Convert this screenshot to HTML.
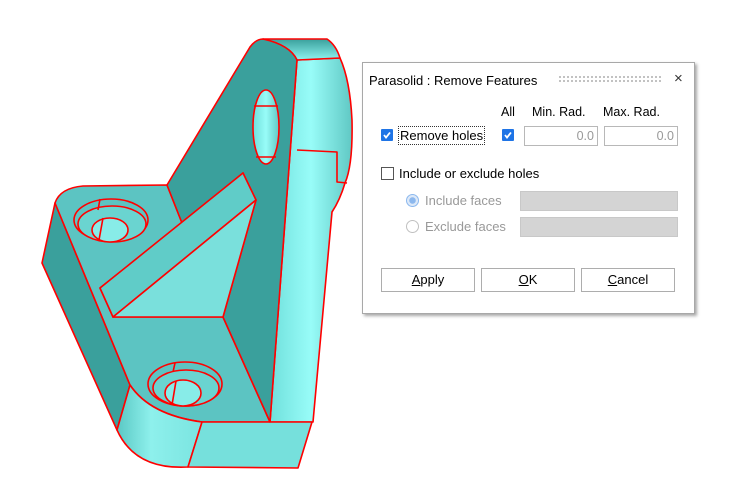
<!DOCTYPE html>
<html><head><meta charset="utf-8"><style>
body{margin:0;width:733px;height:486px;background:#fff;position:relative;overflow:hidden;font-family:"Liberation Sans",Arial,sans-serif;font-size:12.5px;color:#000}
.dlg{position:absolute;left:362px;top:62px;width:331px;height:250px;border:1px solid #a8a8a8;background:#fff;box-shadow:2px 2px 3px rgba(0,0,0,.35)}
.a{position:absolute;white-space:nowrap}
.cb{position:absolute;width:12px;height:12px;background:#1e74e6;border-radius:1px}
.cb svg{position:absolute;left:1px;top:1px}
.cbe{position:absolute;width:11px;height:11px;border:1px solid #555;background:#fff}
.in{position:absolute;height:20px;border:1px solid #b8b8b8;background:#fff;color:#999;text-align:right;box-sizing:border-box;padding:2px 3px 0 0}
.gr{position:absolute;height:20px;background:#d4d4d4;border:1px solid #c8c8c8;box-sizing:border-box}
.btn{position:absolute;top:205px;width:94px;height:24px;border:1px solid #adadad;box-sizing:border-box;background:#fff;text-align:center;line-height:22px;font-size:13px}
.rad{position:absolute;width:11px;height:11px;border:1px solid #c0c0c0;border-radius:50%;background:#fff}
</style></head><body>
<svg width="733" height="486" style="position:absolute;left:0;top:0" stroke="#f00" stroke-width="1.6" stroke-linejoin="round">
<defs>
<linearGradient id="cyl" x1="0" x2="1"><stop offset="0" stop-color="#5ac8c4"/><stop offset=".4" stop-color="#8ef0ec"/><stop offset="1" stop-color="#7ae4e0"/></linearGradient>
<linearGradient id="side" x1="0" x2="1"><stop offset="0" stop-color="#70e0dc"/><stop offset=".5" stop-color="#98fcf8"/><stop offset="1" stop-color="#60c8c4"/></linearGradient>
<linearGradient id="topg" x1="0" y1="0" x2="0" y2="1"><stop offset="0" stop-color="#3aa09c"/><stop offset="1" stop-color="#8ef4f0"/></linearGradient>
</defs>
<!-- right side of upright -->
<path d="M297,60 L340,58 Q350,80 352,120 Q353,165 345,183 Q340,200 332,212 L313,422 L270,422 Z" fill="url(#side)"/>
<path d="M263,39 L327,39 Q336,45 340,58 L297,60 Q290,45 263,39 Z" fill="url(#topg)"/>
<path d="M297,150 L337,152 L337,182 L347,183" fill="none"/>
<!-- left side dark -->
<path d="M55,203 L42,263 L117,430 L130,385 Z" fill="#3aa09c"/>
<!-- base top -->
<path d="M55,203 Q60,188 83,186 L167,185 L182,223 L100,288 L113,317 L223,317 L270,422 L243,422 L202,422 Q150,415 130,385 Z" fill="#5cc4c2"/>
<!-- bottom cylinder -->
<path d="M117,430 L130,385 Q150,415 202,422 L188,467 Q135,470 117,430 Z" fill="url(#cyl)"/>
<!-- bottom block -->
<path d="M202,422 L312,422 L298,468 L188,467 Z" fill="#76e0dc"/>
<!-- plate dark face -->
<path d="M167,185 L250,47 Q256,39 263,39 Q290,45 297,60 L270,422 L223,317 L256,200 L243,173 L182,223 Z" fill="#3aa09c"/>
<!-- rib -->
<path d="M100,288 L243,173 L256,200 L113,317 Z" fill="#60ccc8"/>
<path d="M113,317 L256,200 L223,317 Z" fill="#7ae0dc"/>
<!-- plate hole -->
<ellipse cx="266" cy="127" rx="13" ry="37" fill="url(#side)"/>
<path d="M254,106 L278,106 M256,157 L276,157" fill="none"/>
<!-- counterbores -->
<ellipse cx="111" cy="220" rx="37" ry="21" fill="#5cc4c2"/>
<ellipse cx="112" cy="224" rx="34" ry="18" fill="#6ad4d0"/>
<ellipse cx="110" cy="230" rx="18" ry="12" fill="#88ece8"/>
<path d="M100,199 L98,210 M103,218 L99,240" fill="none"/>
<ellipse cx="185" cy="384" rx="37" ry="22" fill="#5cc4c2"/>
<ellipse cx="186" cy="388" rx="33" ry="18" fill="#6ad4d0"/>
<ellipse cx="183" cy="393" rx="18" ry="13" fill="#88ece8"/>
<path d="M175,363 L173,372 M176,381 L172,405" fill="none"/>
</svg>

<div class="dlg">
<div class="a" style="left:6px;top:10px;font-size:13px">Parasolid : Remove Features</div>
<div class="a" style="left:195px;top:12px;width:104px;height:8px;background-image:radial-gradient(circle,#999 0.7px,transparent 1px);background-size:4px 4px"></div>
<div class="a" style="left:311px;top:7px;font-size:15px;color:#333">×</div>
<div class="a" style="left:138px;top:42px">All</div>
<div class="a" style="left:169px;top:42px">Min. Rad.</div>
<div class="a" style="left:240px;top:42px">Max. Rad.</div>
<div class="cb" style="left:18px;top:66px"><svg width="10" height="10"><path d="M2,5 L4,7.5 L8,2.5" stroke="#fff" stroke-width="1.8" fill="none"/></svg></div>
<div class="a" style="left:35px;top:63px;border:1px dotted #333;padding:1px 1px;font-size:13px">Remove holes</div>
<div class="cb" style="left:139px;top:66px"><svg width="10" height="10"><path d="M2,5 L4,7.5 L8,2.5" stroke="#fff" stroke-width="1.8" fill="none"/></svg></div>
<div class="in" style="left:161px;top:63px;width:74px">0.0</div>
<div class="in" style="left:241px;top:63px;width:74px">0.0</div>
<div class="cbe" style="left:18px;top:104px"></div>
<div class="a" style="left:36px;top:103px;font-size:13px">Include or exclude holes</div>
<div class="rad" style="left:43px;top:131px;border-color:#8cb8ee;background:radial-gradient(circle,#8cb8ee 3px,#dde9f8 3.5px)"></div>
<div class="a" style="left:62px;top:130px;color:#999;font-size:13px">Include faces</div>
<div class="gr" style="left:157px;top:128px;width:158px"></div>
<div class="rad" style="left:43px;top:157px"></div>
<div class="a" style="left:62px;top:156px;color:#999;font-size:13px">Exclude faces</div>
<div class="gr" style="left:157px;top:154px;width:158px"></div>
<div class="btn" style="left:18px"><u>A</u>pply</div>
<div class="btn" style="left:118px"><u>O</u>K</div>
<div class="btn" style="left:218px"><u>C</u>ancel</div>
</div>
</body></html>
